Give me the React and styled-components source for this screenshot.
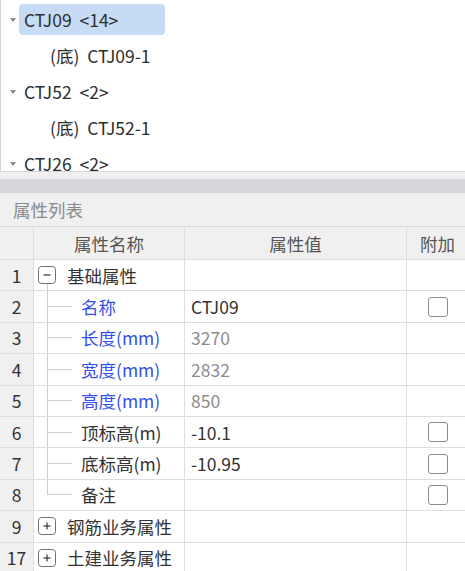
import React from "react";
import styled, { createGlobalStyle } from "styled-components";

const GlobalStyle = createGlobalStyle`
  html, body {
    margin: 0;
    padding: 0;
    background: #f0f0f0;
  }
  body {
    font-family: "Noto Sans CJK SC", "Noto Sans", sans-serif;
    font-size: 17.5px;
    color: #333;
  }
`;

const Page = styled.div`
  width: 465px;
  height: 571px;
  overflow: hidden;
  display: flex;
  flex-direction: column;
  background: #f0f0f0;
`;

const TreePanel = styled.div`
  height: 172px;
  box-sizing: border-box;
  background: #fff;
  border-left: 1px solid #d6d6d6;
  border-bottom: 1px solid #d6d6d6;
  padding-top: 4px;
  overflow: hidden;
  flex-shrink: 0;
`;

const TreeItem = styled.div`
  height: 36px;
  display: flex;
  align-items: flex-start;
  padding-left: ${(p) => (p.$level ? 44 : 9)}px;
`;

const Caret = styled.span`
  width: 0;
  height: 0;
  margin-top: 14px;
  margin-right: 3px;
  border-left: 3.5px solid transparent;
  border-right: 3.5px solid transparent;
  border-top: 4px solid #8a8a8a;
`;

const TreeLabel = styled.span`
  height: 31px;
  line-height: 31px;
  padding: 0 5px;
  width: ${(p) => (p.$selected ? "146px" : "auto")};
  box-sizing: border-box;
  border-radius: 4px;
  background: ${(p) => (p.$selected ? "#c6dcf4" : "transparent")};
  color: #2e2e2e;
  white-space: pre;
`;

const Gap = styled.div`
  height: 7px;
  flex-shrink: 0;
`;

const Splitter = styled.div`
  height: 14px;
  background: #d5d7da;
  flex-shrink: 0;
`;

const Title = styled.div`
  height: 33px;
  display: flex;
  align-items: center;
  padding-left: 13px;
  color: #8a8a8a;
  flex-shrink: 0;
`;

const Table = styled.div`
  border-top: 1px solid #d9d9d9;
  background: #fff;
`;

const Row = styled.div`
  display: grid;
  grid-template-columns: 34px 151px 222px 62px;
  height: ${(p) => (p.$header ? "33px" : "31.4px")};
  box-sizing: border-box;
  border-bottom: 1px solid #dedede;
  background: ${(p) => (p.$header ? "#f0f0f0" : "#fff")};
`;

const Cell = styled.div`
  display: flex;
  align-items: center;
  justify-content: ${(p) => (p.$center ? "center" : "flex-start")};
  box-sizing: border-box;
  border-right: 1px solid #dedede;
  padding-left: ${(p) => p.$pad || 0}px;
  color: ${(p) => p.$color || "#333"};
  white-space: nowrap;
  overflow: hidden;
  height: 100%;
`;

const NumCell = styled(Cell)`
  background: #f0f0f0;
  justify-content: center;
  color: #333;
`;

const HeadCell = styled(Cell)`
  justify-content: center;
  color: #555;
`;

const Guide = styled.span`
  align-self: stretch;
  width: 34px;
  margin-left: 13px;
  flex-shrink: 0;
  background:
    linear-gradient(#cfcfcf, #cfcfcf) 0 0 / 1px ${(p) => (p.$last ? "50%" : "100%")} no-repeat,
    linear-gradient(#cfcfcf, #cfcfcf) 0 50% / 25px 1px no-repeat;
`;

const ToggleWrap = styled.span`
  display: flex;
  align-items: center;
  align-self: stretch;
  margin-left: 4px;
  margin-right: 11px;
  background: ${(p) =>
    p.$open
      ? "linear-gradient(#cfcfcf, #cfcfcf) 8.5px 24px / 1px 100% no-repeat"
      : "none"};
`;

const Check = styled.span`
  width: 20px;
  height: 20px;
  box-sizing: border-box;
  border: 1.5px solid #8c8c8c;
  border-radius: 3px;
  background: #fff;
`;

function Toggle({ open }) {
  return (
    <ToggleWrap $open={open}>
      <svg width="18" height="18" viewBox="0 0 18 18">
        <rect x="0.5" y="0.5" width="17" height="17" rx="3" fill="#fff" stroke="#707070" />
        <line x1="5.5" y1="9" x2="12.5" y2="9" stroke="#333" strokeWidth="1.2" />
        {!open && <line x1="9" y1="5.5" x2="9" y2="12.5" stroke="#333" strokeWidth="1.2" />}
      </svg>
    </ToggleWrap>
  );
}

const BLUE = "#3550ea";
const GREY = "#8c8c8c";

const props = [
  { n: 2, name: "名称", blue: true, value: "CTJ09", check: true },
  { n: 3, name: "长度(mm)", blue: true, value: "3270", grey: true },
  { n: 4, name: "宽度(mm)", blue: true, value: "2832", grey: true },
  { n: 5, name: "高度(mm)", blue: true, value: "850", grey: true },
  { n: 6, name: "顶标高(m)", value: "-10.1", check: true },
  { n: 7, name: "底标高(m)", value: "-10.95", check: true },
  { n: 8, name: "备注", value: "", check: true, last: true },
];

export default function App() {
  return (
    <Page>
      <GlobalStyle />
      <TreePanel>
        <TreeItem>
          <Caret />
          <TreeLabel $selected>CTJ09  &lt;14&gt;</TreeLabel>
        </TreeItem>
        <TreeItem $level={1}>
          <TreeLabel>(底)  CTJ09-1</TreeLabel>
        </TreeItem>
        <TreeItem>
          <Caret />
          <TreeLabel>CTJ52  &lt;2&gt;</TreeLabel>
        </TreeItem>
        <TreeItem $level={1}>
          <TreeLabel>(底)  CTJ52-1</TreeLabel>
        </TreeItem>
        <TreeItem>
          <Caret />
          <TreeLabel>CTJ26  &lt;2&gt;</TreeLabel>
        </TreeItem>
      </TreePanel>
      <Gap />
      <Splitter />
      <Title>属性列表</Title>
      <Table>
        <Row $header>
          <NumCell />
          <HeadCell>属性名称</HeadCell>
          <HeadCell>属性值</HeadCell>
          <HeadCell>附加</HeadCell>
        </Row>
        <Row>
          <NumCell>1</NumCell>
          <Cell>
            <Toggle open />
            基础属性
          </Cell>
          <Cell />
          <Cell />
        </Row>
        {props.map((p) => (
          <Row key={p.n}>
            <NumCell>{p.n}</NumCell>
            <Cell $color={p.blue ? BLUE : "#333"}>
              <Guide $last={p.last} />
              {p.name}
            </Cell>
            <Cell $pad={6} $color={p.grey ? GREY : "#333"}>
              {p.value}
            </Cell>
            <Cell $center>{p.check && <Check />}</Cell>
          </Row>
        ))}
        <Row>
          <NumCell>9</NumCell>
          <Cell>
            <Toggle />
            钢筋业务属性
          </Cell>
          <Cell />
          <Cell />
        </Row>
        <Row>
          <NumCell>17</NumCell>
          <Cell>
            <Toggle />
            土建业务属性
          </Cell>
          <Cell />
          <Cell />
        </Row>
      </Table>
    </Page>
  );
}
